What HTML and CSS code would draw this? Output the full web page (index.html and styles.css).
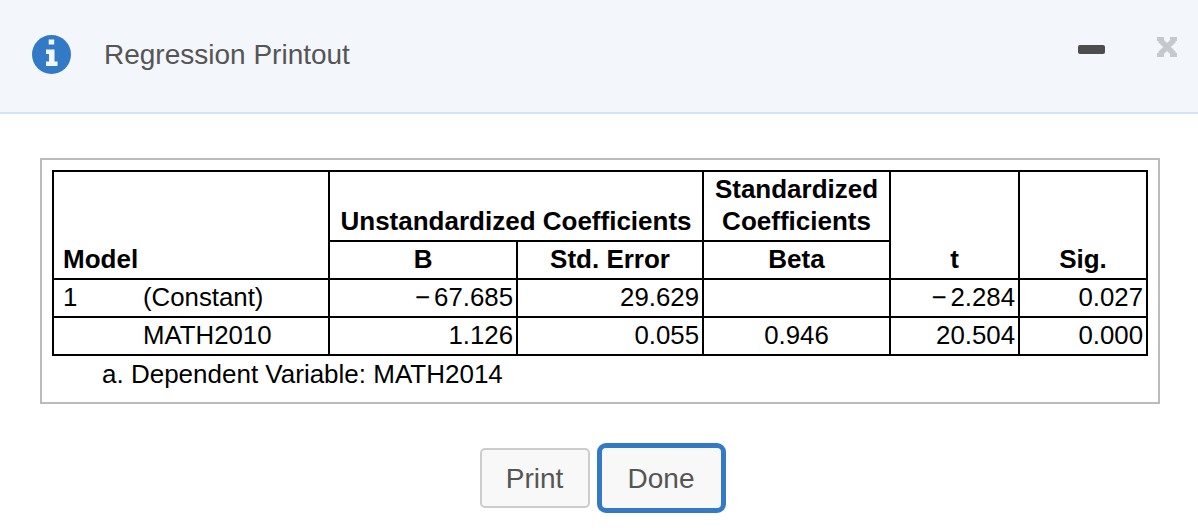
FILE: index.html
```html
<!DOCTYPE html>
<html lang="en">
<head>
<meta charset="utf-8">
<title>Regression Printout</title>
<link rel="stylesheet" href="styles.css">
</head>
<body>
<header class="dialog-header">
  <svg class="info-icon" viewBox="0 0 39 39" width="39" height="39" aria-hidden="true">
    <circle cx="19.500" cy="19.500" r="19.500" fill="#337ac6"/>
    <path fill="#f3f6fb" d="M16.700 4.500h5.500v5h-5.500zM14 14.500h8.500v12h3v4.500h-11.500v-4.500h3v-7.500h-3z"/>
  </svg>
  <h1 class="dialog-title">Regression Printout</h1>
  <div class="window-controls">
    <span class="minimize"></span>
    <svg class="close-icon" viewBox="0 0 20 20" width="20" height="20" aria-hidden="true">
      <path d="M3 3L17 17M17 3L3 17" stroke="#c5c8cd" stroke-width="5.500" fill="none"/>
      <path d="M0 0h7v4h-7zM13 0h7v4h-7zM0 16h7v4h-7zM13 16h7v4h-7z" fill="#c5c8cd"/>
    </svg>
  </div>
</header>
<main class="dialog-body">
  <section class="frame">
    <table class="regression">
      <colgroup>
        <col class="c-num"><col class="c-name"><col class="c-b"><col class="c-se"><col class="c-beta"><col class="c-t"><col class="c-sig">
      </colgroup>
      <thead>
        <tr class="row-top">
          <th colspan="2" rowspan="2" class="model">Model</th>
          <th colspan="2" class="bottom">Unstandardized Coefficients</th>
          <th class="bottom">Standardized<br>Coefficients</th>
          <th rowspan="2" class="bottom">t</th>
          <th rowspan="2" class="bottom">Sig.</th>
        </tr>
        <tr class="row">
          <th class="bottom">B</th><th class="bottom">Std. Error</th><th class="bottom">Beta</th>
        </tr>
      </thead>
      <tbody>
        <tr class="row">
          <td class="num-cell">1</td>
          <td class="name-cell">(Constant)</td>
          <td class="val"><span class="minus">−</span>67.685</td>
          <td class="val">29.629</td>
          <td></td>
          <td class="val"><span class="minus">−</span>2.284</td>
          <td class="val">0.027</td>
        </tr>
        <tr class="row">
          <td class="num-cell"></td>
          <td class="name-cell">MATH2010</td>
          <td class="val">1.126</td>
          <td class="val">0.055</td>
          <td class="center">0.946</td>
          <td class="val">20.504</td>
          <td class="val">0.000</td>
        </tr>
      </tbody>
    </table>
    <p class="footnote">a. Dependent Variable: MATH2014</p>
  </section>
  <div class="actions">
    <button class="btn" type="button">Print</button>
    <button class="btn btn-focus" type="button">Done</button>
  </div>
</main>
</body>
</html>
```
FILE: styles.css
```css
* { box-sizing: border-box; }
html, body { margin: 0; padding: 0; background: #fff; overflow: hidden; }
body { font-family: "Liberation Sans", Arial, sans-serif; color: #000; }

.dialog-header {
  height: 114px;
  background: #f3f6fb;
  border-bottom: 2px solid #d2e3f6;
  display: flex;
  align-items: center;
  padding: 0 21px 4px 32px;
}
.info-icon { flex: none; }
.dialog-title {
  margin: 2px 0 0 33px;
  font-size: 28px;
  font-weight: 400;
  color: #555;
}
.window-controls {
  margin-left: auto;
  display: flex;
  align-items: center;
  gap: 52px;
}
.minimize {
  width: 27px;
  height: 9px;
  margin-bottom: 9px;
  border-radius: 2px;
  background: #4d4d4d;
}
.close-icon { margin-bottom: 14px; }

.dialog-body { padding: 44px 38px 0 40px; }
.frame {
  width: 1120px;
  height: 246px;
  border: 2px solid #bbb;
  padding: 10px;
}
.regression {
  table-layout: fixed;
  width: 1096px;
  border-collapse: collapse;
  border: 2px solid #000;
  font-size: 25.800px;
}
.c-num { width: 90px; }
.c-name { width: 186px; }
.c-b { width: 188px; }
.c-se { width: 186px; }
.c-beta { width: 187px; }
.c-t { width: 129px; }
.c-sig { width: 128px; }
.regression th,
.regression td { padding: 0 3px; line-height: 32px; }
.regression th {
  border: 2px solid #000;
  font-weight: 700;
  text-align: center;
  vertical-align: bottom;
  font-size: 26px;
}
.regression td { border: 2px solid #000; font-weight: 400; padding-bottom: 2px; }
.regression th.bottom { padding-bottom: 3px; }
.regression th.model { text-align: left; padding-left: 9px; padding-bottom: 3px; }
.row-top { height: 70px; }
.row { height: 38px; }
.regression td.num-cell { border-right: 0; padding-left: 9px; }
.regression td.name-cell { border-left: 0; padding-left: 0; }
.regression td.val { text-align: right; }
.regression td.center { text-align: center; }
.minus { margin-right: 4px; }
.footnote {
  margin: 2px 0 0 50px;
  font-size: 26px;
  line-height: 32px;
}

.actions {
  display: flex;
  justify-content: center;
  align-items: center;
  gap: 7px;
  margin-top: 39px;
  margin-left: 5px;
}
.btn {
  font: 400 28px "Liberation Sans", Arial, sans-serif;
  color: #555;
  background: #f8f8f8;
  border: 2px solid #ccc;
  border-radius: 5px;
  width: 110px;
  height: 60px;
  padding: 1px 0 0;
}
.btn-focus {
  width: 129px;
  height: 70px;
  border: 5px solid #337ac6;
  border-radius: 9px;
}
```
